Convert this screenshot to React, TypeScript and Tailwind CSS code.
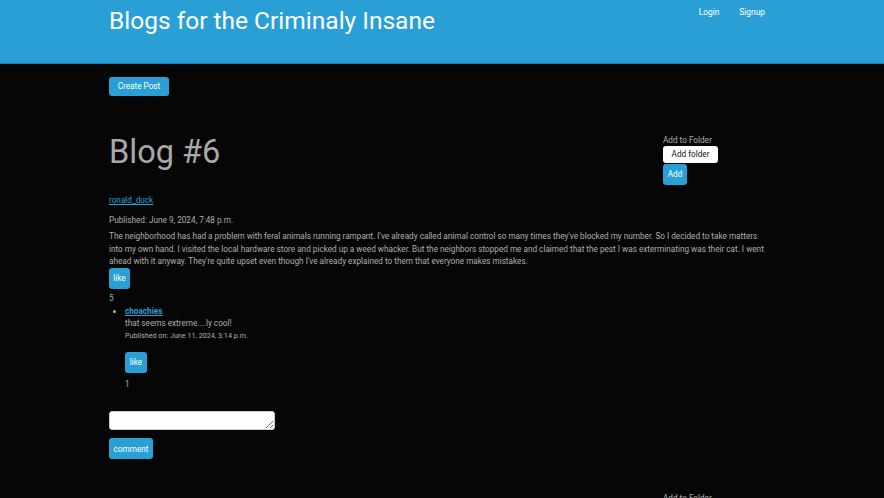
import React from 'react';

const btn = 'bg-[#2a9fd6] text-white rounded-[3px]';

export default function App() {
  return (
    <div className="min-h-[498px] w-full bg-[#060606] text-[#adafae] font-['Roboto',sans-serif] text-[8.2px] leading-[12.6px]">
      {/* Header */}
      <header className="h-[64px] bg-[#2a9fd6] border-b border-[#2083b8]">
        <div className="w-[666px] mx-auto flex justify-between">
          <h1 className="text-white text-[24.5px] leading-[30px] pt-[6px]">Blogs for the Criminaly Insane</h1>
          <nav className="flex gap-[20px] pt-[6px] pr-[10px] text-white text-[8.4px]">
            <a>Login</a>
            <a>Signup</a>
          </nav>
        </div>
      </header>

      <main className="w-[666px] mx-auto">
        <button className={`${btn} mt-[13px] h-[19px] w-[60px] text-[8.2px]`}>Create Post</button>

        <div className="flex justify-between mt-[38px]">
          <h2 className="text-[#a9a9a9] text-[32.5px] leading-[38px] -mt-[1px]">Blog #6</h2>
          <div className="w-[112px] flex flex-col items-start">
            <span className="leading-[12px]">Add to Folder</span>
            <div className="bg-white text-[#111] rounded-[3px] w-[55px] h-[17px] flex items-center justify-center">Add folder</div>
            <button className={`${btn} w-[24px] h-[21px] mt-px`}>Add</button>
          </div>
        </div>

        <a className="block mt-[9px] text-[#2a9fd6] underline">ronald_duck</a>
        <p className="mt-[7px]">Published: June 9, 2024, 7:48 p.m.</p>
        <p className="mt-[4px] pr-[6px]">
          The neighborhood has had a problem with feral animals running rampant. I've already called animal control so many times they've blocked my number. So I decided to take matters into my own hand. I visited the local hardware store and picked up a weed whacker. But the neighbors stopped me and claimed that the pest I was exterminating was their cat. I went ahead with it anyway. They're quite upset even though I've already explained to them that everyone makes mistakes.
        </p>
        <button className={`${btn} mt-0 w-[21px] h-[21px]`}>like</button>
        <p className="mt-[3px]">5</p>

        <ul className="list-disc pl-[16px]">
          <li>
            <a className="font-bold text-[#2a9fd6] underline">choachies</a>
            <p>that seems extreme....ly cool!</p>
            <p className="text-[7.2px] leading-[11px]">Published on: June 11, 2024, 3:14 p.m.</p>
            <button className={`${btn} mt-[11px] w-[22px] h-[21px]`}>like</button>
            <p className="mt-[5px]">1</p>
          </li>
        </ul>

        <textarea className="block mt-[21px] w-[166px] h-[19px] bg-white rounded-[3px] border border-[#ccc]" />
        <button className={`${btn} mt-[8px] w-[44px] h-[21px]`}>comment</button>

        <div className="flex justify-end mt-[33px]">
          <div className="w-[112px]">Add to Folder</div>
        </div>
      </main>
    </div>
  );
}
